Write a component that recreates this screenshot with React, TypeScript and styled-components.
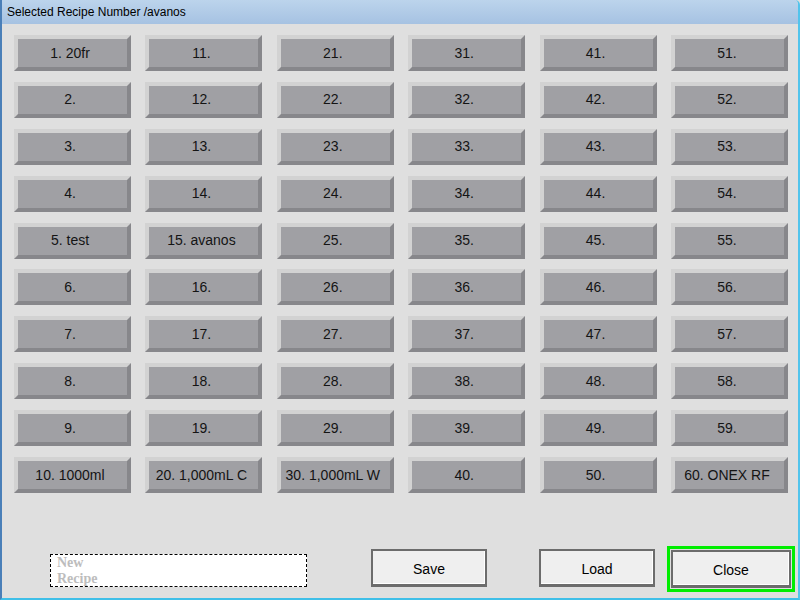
import styled, { createGlobalStyle } from "styled-components";

const GlobalStyle = createGlobalStyle`
  html, body {
    margin: 0;
    padding: 0;
    background: #dfdfdf;
  }
  * {
    box-sizing: border-box;
  }
`;

const recipes: Record<number, string> = {
  1: "20fr",
  5: "test",
  10: "1000ml",
  15: "avanos",
  20: "1,000mL C",
  30: "1,000mL W",
  60: "ONEX RF",
};

const Window = styled.div`
  width: 800px;
  height: 600px;
  display: flex;
  flex-direction: column;
  background: #dfdfdf;
  border-left: 2px solid #4a7fb8;
  border-right: 2px solid #52c4ec;
  border-bottom: 2px solid #3fbfe8;
  border-top-right-radius: 5px;
  overflow: hidden;
`;

const TitleBar = styled.div`
  height: 24px;
  flex: none;
  display: flex;
  align-items: center;
  padding-left: 5px;
  background: linear-gradient(#bcd4ec, #a6c2e2);
  font-family: "Liberation Sans", Arial, sans-serif;
  font-size: 12px;
  color: #000;
`;

const Body = styled.div`
  flex: 1;
  display: flex;
  flex-direction: column;
  justify-content: space-between;
  padding: 11px 0 11px 12px;
`;

const Grid = styled.div`
  display: grid;
  grid-template-columns: repeat(6, 117px);
  grid-auto-flow: column;
  grid-template-rows: repeat(10, 36px);
  column-gap: 14.4px;
  row-gap: 10.9px;
`;

const Tile = styled.button`
  width: 117px;
  height: 36px;
  padding: 0 5px 1px 0;
  border-width: 4px;
  border-style: solid;
  border-color: #d2d2d2 #87878b #87878b #d2d2d2;
  background: #a0a0a4;
  font-family: "Liberation Sans", Arial, sans-serif;
  font-size: 14px;
  color: #141414;
  white-space: nowrap;
`;

const Footer = styled.div`
  display: flex;
  align-items: flex-end;
`;

const NameBox = styled.div`
  width: 257px;
  height: 33px;
  margin-left: 36px;
  margin-right: 64px;
  background: #fff;
  border: 1px dashed #000;
  padding: 0 0 0 6px;
  font-family: "Liberation Serif", "DejaVu Serif", serif;
  font-weight: bold;
  font-size: 14px;
  line-height: 16px;
  color: #bdbdbd;
`;

const ActionButton = styled.button<{ $gap?: number; $focused?: boolean }>`
  width: ${(p) => (p.$focused ? 120 : 116)}px;
  height: 38px;
  margin-right: ${(p) => p.$gap ?? 0}px;
  margin-bottom: ${(p) => (p.$focused ? -1 : 0)}px;
  padding: 2px 0 0 0;
  background: #efefef;
  border-style: solid;
  border-width: 2px 2px 3px 2px;
  border-color: #6c6c6c;
  box-shadow: inset -1px -1px 0 #fff;
  font-family: "Liberation Sans", Arial, sans-serif;
  font-size: 14px;
  color: #000;
  outline: ${(p) => (p.$focused ? "3px solid #00ee00" : "none")};
  outline-offset: 1px;
`;

export default function App() {
  const tiles = Array.from({ length: 60 }, (_, i) => i + 1);
  return (
    <>
      <GlobalStyle />
      <Window>
        <TitleBar>Selected Recipe Number /avanos</TitleBar>
        <Body>
          <Grid>
            {tiles.map((n) => (
              <Tile key={n}>
                {n}. {recipes[n] ?? ""}
              </Tile>
            ))}
          </Grid>
          <Footer>
            <NameBox>
              New
              <br />
              Recipe
            </NameBox>
            <ActionButton $gap={52}>Save</ActionButton>
            <ActionButton $gap={16}>Load</ActionButton>
            <ActionButton $focused>Close</ActionButton>
          </Footer>
        </Body>
      </Window>
    </>
  );
}
